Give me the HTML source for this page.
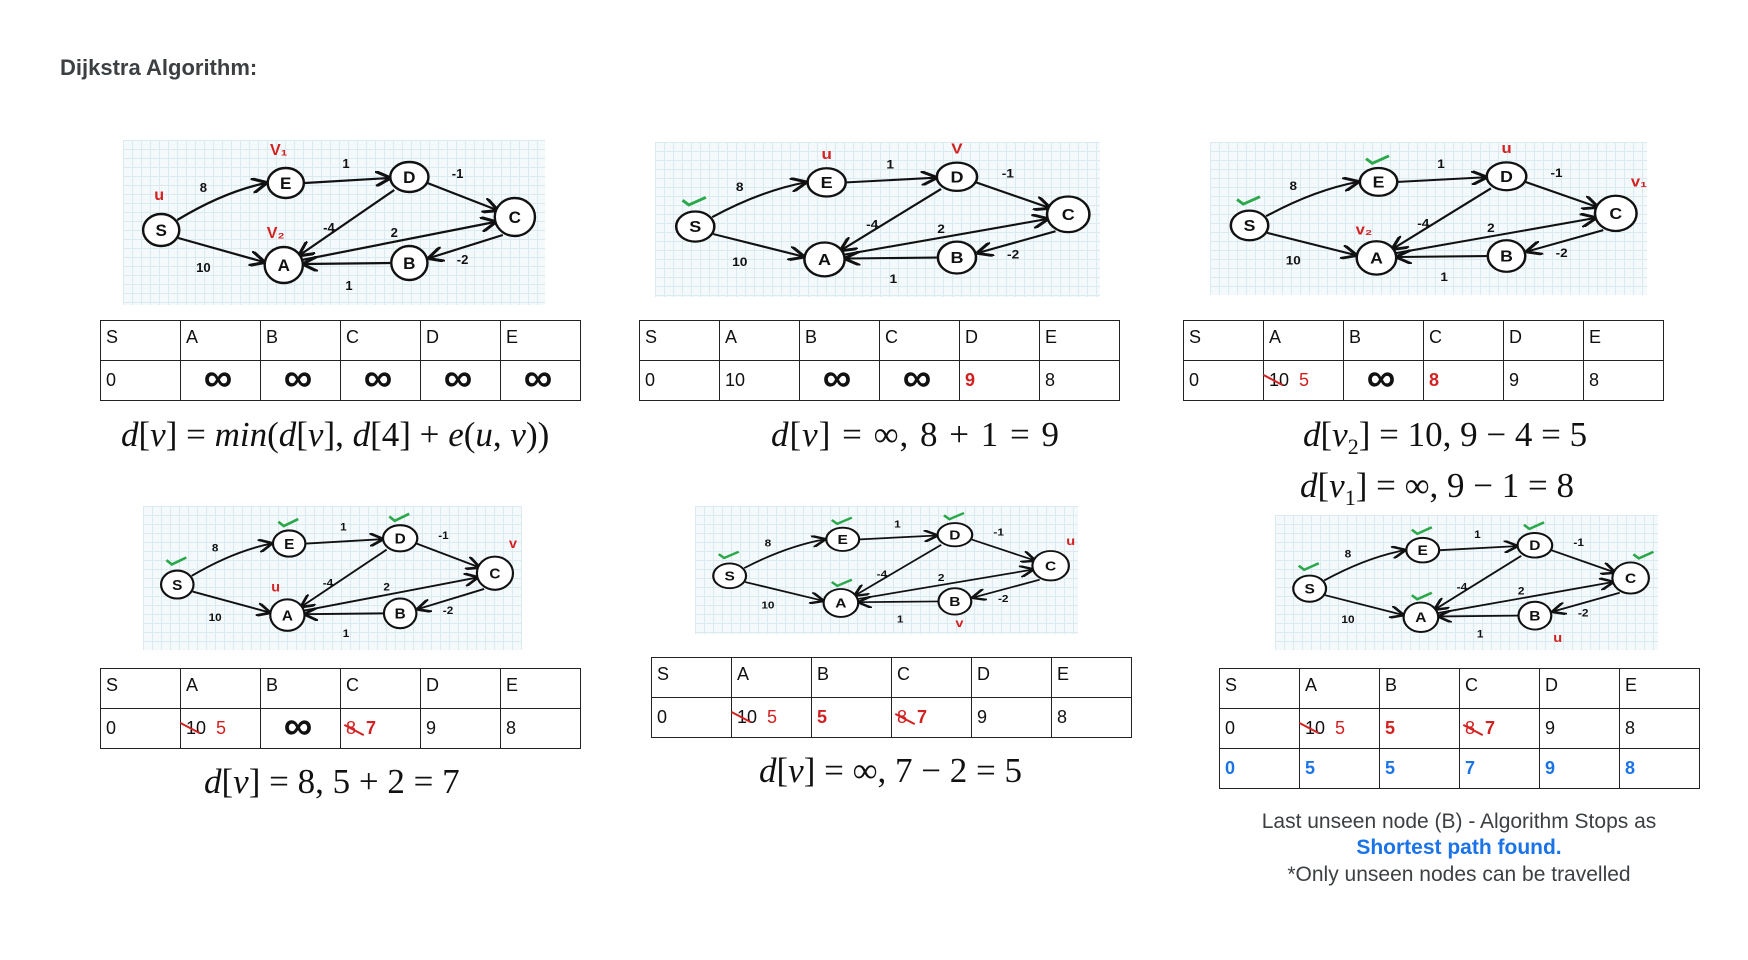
<!DOCTYPE html>
<html><head><meta charset="utf-8"><style>
*{margin:0;padding:0;box-sizing:border-box}
body{width:1748px;height:960px;background:#fff;position:relative;overflow:hidden;font-family:"Liberation Sans",sans-serif}
.t{position:absolute;left:60px;top:55px;font-weight:bold;font-size:22px;color:#3c4043}
.g{position:absolute;background-color:#f4fafc;background-image:linear-gradient(#dbe9f0 1px,transparent 1px),linear-gradient(90deg,#dbe9f0 1px,transparent 1px);background-size:9px 9px}
.g svg{width:100%;height:100%;display:block}
table{position:absolute;border-collapse:collapse;font-size:18px;color:#111}
td{border:1.5px solid #222;width:80px;height:40px;vertical-align:middle;padding:0 0 0 5px;position:relative}
tr:first-child td{vertical-align:top;padding-top:6px}
.inf{font-weight:bold;font-size:40px;line-height:30px;display:block;text-align:center;margin-left:-10px;margin-top:-6px}
.r{color:#d32020}.rb{color:#d32020;font-weight:bold}.b{color:#1a73e8;font-weight:bold}
.x{position:absolute;height:2px;background:#d32020;transform:rotate(28deg);width:22px}
.f{position:absolute;font-family:"Liberation Serif",serif;font-size:35px;color:#111;white-space:nowrap}
.f i{font-style:italic}
.n{position:absolute;left:1232px;width:454px;text-align:center;font-size:21px;color:#3c4043}
</style></head><body>
<div class="t">Dijkstra Algorithm:</div>

<!-- graph 1 -->
<div class="g" style="left:123px;top:140px;width:422px;height:165px"><svg viewBox="0 0 420 165" preserveAspectRatio="none">
<defs><marker id="ar" viewBox="0 0 10 10" refX="9" refY="5" markerWidth="7" markerHeight="7" orient="auto"><path d="M0,0L10,5L0,10" fill="none" stroke="#111" stroke-width="2"/></marker></defs>
<g fill="none" stroke="#111" stroke-width="2.2" marker-end="url(#ar)"><path d="M54,80 Q100,52 142,43"/><path d="M55,98 L140,122"/><path d="M181,43 L265,38"/><path d="M303,43 L372,70"/><path d="M270,50 L176,115"/><path d="M178,120 L370,82"/><path d="M378,95 L305,118"/><path d="M266,123 L180,124"/></g>
<g fill="#fff" stroke="#111" stroke-width="2.4"><ellipse cx="38" cy="90" rx="18" ry="16"/><ellipse cx="162" cy="43" rx="18" ry="15"/><ellipse cx="285" cy="37" rx="19" ry="15"/><ellipse cx="390" cy="77" rx="20" ry="19"/><ellipse cx="160" cy="125" rx="19" ry="18"/><ellipse cx="285" cy="123" rx="18" ry="17"/></g>
<g font-family="Liberation Sans" font-size="17" font-weight="bold" text-anchor="middle" fill="#111"><text x="38" y="96">S</text><text x="162" y="49">E</text><text x="285" y="43">D</text><text x="390" y="83">C</text><text x="160" y="131">A</text><text x="285" y="129">B</text></g>
<g font-family="Liberation Sans" font-size="13" font-weight="bold" text-anchor="middle" fill="#111"><text x="80" y="52">8</text><text x="80" y="132">10</text><text x="222" y="28">1</text><text x="333" y="38">-1</text><text x="205" y="92">-4</text><text x="270" y="97">2</text><text x="338" y="124">-2</text><text x="225" y="150">1</text></g>
<g font-family="Liberation Sans" font-size="16" font-weight="bold" fill="#d32020" text-anchor="middle"><text x="36" y="60">u</text><text x="155" y="15">V₁</text><text x="152" y="98">V₂</text></g>
</svg></div>
<table style="left:100px;top:320px"><tr><td>S</td><td>A</td><td>B</td><td>C</td><td>D</td><td>E</td></tr><tr><td>0</td><td><span class="inf">∞</span></td><td><span class="inf">∞</span></td><td><span class="inf">∞</span></td><td><span class="inf">∞</span></td><td><span class="inf">∞</span></td></tr></table>
<div class="f" style="left:121px;top:415px"><i>d</i>[<i>v</i>] = <i>min</i>(<i>d</i>[<i>v</i>], <i>d</i>[4] + <i>e</i>(<i>u</i>, <i>v</i>))</div>

<!-- graph 2 -->
<div class="g" style="left:655px;top:142px;width:445px;height:155px"><svg viewBox="0 0 420 165" preserveAspectRatio="none">
<g fill="none" stroke="#111" stroke-width="2.2" marker-end="url(#ar)"><path d="M54,80 Q100,52 142,43"/><path d="M55,98 L140,122"/><path d="M181,43 L265,38"/><path d="M303,43 L372,70"/><path d="M270,50 L176,115"/><path d="M178,120 L370,82"/><path d="M378,95 L305,118"/><path d="M266,123 L180,124"/></g>
<g fill="#fff" stroke="#111" stroke-width="2.4"><ellipse cx="38" cy="90" rx="18" ry="16"/><ellipse cx="162" cy="43" rx="18" ry="15"/><ellipse cx="285" cy="37" rx="19" ry="15"/><ellipse cx="390" cy="77" rx="20" ry="19"/><ellipse cx="160" cy="125" rx="19" ry="18"/><ellipse cx="285" cy="123" rx="18" ry="17"/></g>
<g font-family="Liberation Sans" font-size="17" font-weight="bold" text-anchor="middle" fill="#111"><text x="38" y="96">S</text><text x="162" y="49">E</text><text x="285" y="43">D</text><text x="390" y="83">C</text><text x="160" y="131">A</text><text x="285" y="129">B</text></g>
<g font-family="Liberation Sans" font-size="13" font-weight="bold" text-anchor="middle" fill="#111"><text x="80" y="52">8</text><text x="80" y="132">10</text><text x="222" y="28">1</text><text x="333" y="38">-1</text><text x="205" y="92">-4</text><text x="270" y="97">2</text><text x="338" y="124">-2</text><text x="225" y="150">1</text></g>
<path d="M26,62 l6,5 l16,-8" fill="none" stroke="#2aa84a" stroke-width="3"/>
<g font-family="Liberation Sans" font-size="16" font-weight="bold" fill="#d32020" text-anchor="middle"><text x="162" y="18">u</text><text x="285" y="12">V</text></g>
</svg></div>
<table style="left:639px;top:320px"><tr><td>S</td><td>A</td><td>B</td><td>C</td><td>D</td><td>E</td></tr><tr><td>0</td><td>10</td><td><span class="inf">∞</span></td><td><span class="inf">∞</span></td><td><span class="rb">9</span></td><td>8</td></tr></table>
<div class="f" style="left:771px;top:415px;letter-spacing:1px;word-spacing:1px"><i>d</i>[<i>v</i>] = ∞, 8 + 1 = 9</div>

<!-- graph 3 -->
<div class="g" style="left:1210px;top:142px;width:437px;height:153px"><svg viewBox="0 0 420 165" preserveAspectRatio="none">
<g fill="none" stroke="#111" stroke-width="2.2" marker-end="url(#ar)"><path d="M54,80 Q100,52 142,43"/><path d="M55,98 L140,122"/><path d="M181,43 L265,38"/><path d="M303,43 L372,70"/><path d="M270,50 L176,115"/><path d="M178,120 L370,82"/><path d="M378,95 L305,118"/><path d="M266,123 L180,124"/></g>
<g fill="#fff" stroke="#111" stroke-width="2.4"><ellipse cx="38" cy="90" rx="18" ry="16"/><ellipse cx="162" cy="43" rx="18" ry="15"/><ellipse cx="285" cy="37" rx="19" ry="15"/><ellipse cx="390" cy="77" rx="20" ry="19"/><ellipse cx="160" cy="125" rx="19" ry="18"/><ellipse cx="285" cy="123" rx="18" ry="17"/></g>
<g font-family="Liberation Sans" font-size="17" font-weight="bold" text-anchor="middle" fill="#111"><text x="38" y="96">S</text><text x="162" y="49">E</text><text x="285" y="43">D</text><text x="390" y="83">C</text><text x="160" y="131">A</text><text x="285" y="129">B</text></g>
<g font-family="Liberation Sans" font-size="13" font-weight="bold" text-anchor="middle" fill="#111"><text x="80" y="52">8</text><text x="80" y="132">10</text><text x="222" y="28">1</text><text x="333" y="38">-1</text><text x="205" y="92">-4</text><text x="270" y="97">2</text><text x="338" y="124">-2</text><text x="225" y="150">1</text></g>
<path d="M26,62 l6,5 l16,-8 M150,18 l6,5 l16,-8" fill="none" stroke="#2aa84a" stroke-width="3"/>
<g font-family="Liberation Sans" font-size="16" font-weight="bold" fill="#d32020" text-anchor="middle"><text x="285" y="12">u</text><text x="420" y="48" text-anchor="end">v₁</text><text x="148" y="100">v₂</text></g>
</svg></div>
<table style="left:1183px;top:320px"><tr><td>S</td><td>A</td><td>B</td><td>C</td><td>D</td><td>E</td></tr><tr><td>0</td><td><span class="x" style="left:-2px;top:18px"></span>10 &nbsp;<span class="r">5</span></td><td><span class="inf">∞</span></td><td><span class="rb">8</span></td><td>9</td><td>8</td></tr></table>
<div class="f" style="left:1303px;top:415px"><i>d</i>[<i>v</i><sub style="font-size:22px">2</sub>] = 10, 9 − 4 = 5</div>
<div class="f" style="left:1300px;top:466px"><i>d</i>[<i>v</i><sub style="font-size:22px">1</sub>] = ∞, 9 − 1 = 8</div>

<!-- graph 4 -->
<div class="g" style="left:143px;top:506px;width:379px;height:144px"><svg viewBox="0 0 420 165" preserveAspectRatio="none">
<g fill="none" stroke="#111" stroke-width="2.2" marker-end="url(#ar)"><path d="M54,80 Q100,52 142,43"/><path d="M55,98 L140,122"/><path d="M181,43 L265,38"/><path d="M303,43 L372,70"/><path d="M270,50 L176,115"/><path d="M178,120 L370,82"/><path d="M378,95 L305,118"/><path d="M266,123 L180,124"/></g>
<g fill="#fff" stroke="#111" stroke-width="2.4"><ellipse cx="38" cy="90" rx="18" ry="16"/><ellipse cx="162" cy="43" rx="18" ry="15"/><ellipse cx="285" cy="37" rx="19" ry="15"/><ellipse cx="390" cy="77" rx="20" ry="19"/><ellipse cx="160" cy="125" rx="19" ry="18"/><ellipse cx="285" cy="123" rx="18" ry="17"/></g>
<g font-family="Liberation Sans" font-size="17" font-weight="bold" text-anchor="middle" fill="#111"><text x="38" y="96">S</text><text x="162" y="49">E</text><text x="285" y="43">D</text><text x="390" y="83">C</text><text x="160" y="131">A</text><text x="285" y="129">B</text></g>
<g font-family="Liberation Sans" font-size="13" font-weight="bold" text-anchor="middle" fill="#111"><text x="80" y="52">8</text><text x="80" y="132">10</text><text x="222" y="28">1</text><text x="333" y="38">-1</text><text x="205" y="92">-4</text><text x="270" y="97">2</text><text x="338" y="124">-2</text><text x="225" y="150">1</text></g>
<path d="M26,62 l6,5 l16,-8 M150,18 l6,5 l16,-8 M273,12 l6,5 l16,-8" fill="none" stroke="#2aa84a" stroke-width="3"/>
<g font-family="Liberation Sans" font-size="16" font-weight="bold" fill="#d32020" text-anchor="middle"><text x="410" y="48">v</text><text x="147" y="98">u</text></g>
</svg></div>
<table style="left:100px;top:668px"><tr><td>S</td><td>A</td><td>B</td><td>C</td><td>D</td><td>E</td></tr><tr><td>0</td><td><span class="x" style="left:-2px;top:18px"></span>10 &nbsp;<span class="r">5</span></td><td><span class="inf">∞</span></td><td><span class="x" style="left:2px;top:20px"></span><span class="r">8</span> &nbsp;<span class="rb">7</span></td><td>9</td><td>8</td></tr></table>
<div class="f" style="left:204px;top:762px"><i>d</i>[<i>v</i>] = 8, 5 + 2 = 7</div>

<!-- graph 5 -->
<div class="g" style="left:695px;top:506px;width:383px;height:128px"><svg viewBox="0 0 420 165" preserveAspectRatio="none">
<g fill="none" stroke="#111" stroke-width="2.2" marker-end="url(#ar)"><path d="M54,80 Q100,52 142,43"/><path d="M55,98 L140,122"/><path d="M181,43 L265,38"/><path d="M303,43 L372,70"/><path d="M270,50 L176,115"/><path d="M178,120 L370,82"/><path d="M378,95 L305,118"/><path d="M266,123 L180,124"/></g>
<g fill="#fff" stroke="#111" stroke-width="2.4"><ellipse cx="38" cy="90" rx="18" ry="16"/><ellipse cx="162" cy="43" rx="18" ry="15"/><ellipse cx="285" cy="37" rx="19" ry="15"/><ellipse cx="390" cy="77" rx="20" ry="19"/><ellipse cx="160" cy="125" rx="19" ry="18"/><ellipse cx="285" cy="123" rx="18" ry="17"/></g>
<g font-family="Liberation Sans" font-size="17" font-weight="bold" text-anchor="middle" fill="#111"><text x="38" y="96">S</text><text x="162" y="49">E</text><text x="285" y="43">D</text><text x="390" y="83">C</text><text x="160" y="131">A</text><text x="285" y="129">B</text></g>
<g font-family="Liberation Sans" font-size="13" font-weight="bold" text-anchor="middle" fill="#111"><text x="80" y="52">8</text><text x="80" y="132">10</text><text x="222" y="28">1</text><text x="333" y="38">-1</text><text x="205" y="92">-4</text><text x="270" y="97">2</text><text x="338" y="124">-2</text><text x="225" y="150">1</text></g>
<path d="M26,62 l6,5 l16,-8 M150,18 l6,5 l16,-8 M273,12 l6,5 l16,-8 M150,98 l6,5 l16,-8" fill="none" stroke="#2aa84a" stroke-width="3"/>
<g font-family="Liberation Sans" font-size="16" font-weight="bold" fill="#d32020" text-anchor="middle"><text x="412" y="50">u</text><text x="290" y="156">v</text></g>
</svg></div>
<table style="left:651px;top:657px"><tr><td>S</td><td>A</td><td>B</td><td>C</td><td>D</td><td>E</td></tr><tr><td>0</td><td><span class="x" style="left:-2px;top:18px"></span>10 &nbsp;<span class="r">5</span></td><td><span class="rb">5</span></td><td><span class="x" style="left:2px;top:20px"></span><span class="r">8</span> &nbsp;<span class="rb">7</span></td><td>9</td><td>8</td></tr></table>
<div class="f" style="left:759px;top:751px"><i>d</i>[<i>v</i>] = ∞, 7 − 2 = 5</div>

<!-- graph 6 -->
<div class="g" style="left:1275px;top:515px;width:383px;height:135px"><svg viewBox="0 0 420 165" preserveAspectRatio="none">
<g fill="none" stroke="#111" stroke-width="2.2" marker-end="url(#ar)"><path d="M54,80 Q100,52 142,43"/><path d="M55,98 L140,122"/><path d="M181,43 L265,38"/><path d="M303,43 L372,70"/><path d="M270,50 L176,115"/><path d="M178,120 L370,82"/><path d="M378,95 L305,118"/><path d="M266,123 L180,124"/></g>
<g fill="#fff" stroke="#111" stroke-width="2.4"><ellipse cx="38" cy="90" rx="18" ry="16"/><ellipse cx="162" cy="43" rx="18" ry="15"/><ellipse cx="285" cy="37" rx="19" ry="15"/><ellipse cx="390" cy="77" rx="20" ry="19"/><ellipse cx="160" cy="125" rx="19" ry="18"/><ellipse cx="285" cy="123" rx="18" ry="17"/></g>
<g font-family="Liberation Sans" font-size="17" font-weight="bold" text-anchor="middle" fill="#111"><text x="38" y="96">S</text><text x="162" y="49">E</text><text x="285" y="43">D</text><text x="390" y="83">C</text><text x="160" y="131">A</text><text x="285" y="129">B</text></g>
<g font-family="Liberation Sans" font-size="13" font-weight="bold" text-anchor="middle" fill="#111"><text x="80" y="52">8</text><text x="80" y="132">10</text><text x="222" y="28">1</text><text x="333" y="38">-1</text><text x="205" y="92">-4</text><text x="270" y="97">2</text><text x="338" y="124">-2</text><text x="225" y="150">1</text></g>
<path d="M26,62 l6,5 l16,-8 M150,18 l6,5 l16,-8 M273,12 l6,5 l16,-8 M150,98 l6,5 l16,-8 M393,48 l6,5 l16,-8" fill="none" stroke="#2aa84a" stroke-width="3"/>
<g font-family="Liberation Sans" font-size="16" font-weight="bold" fill="#d32020" text-anchor="middle"><text x="310" y="155">u</text></g>
</svg></div>
<table style="left:1219px;top:668px"><tr><td>S</td><td>A</td><td>B</td><td>C</td><td>D</td><td>E</td></tr><tr><td>0</td><td><span class="x" style="left:-2px;top:18px"></span>10 &nbsp;<span class="r">5</span></td><td><span class="rb">5</span></td><td><span class="x" style="left:2px;top:20px"></span><span class="r">8</span> &nbsp;<span class="rb">7</span></td><td>9</td><td>8</td></tr><tr><td><span class="b">0</span></td><td><span class="b">5</span></td><td><span class="b">5</span></td><td><span class="b">7</span></td><td><span class="b">9</span></td><td><span class="b">8</span></td></tr></table>
<div class="n" style="top:810px">Last unseen node (B) - Algorithm Stops as</div>
<div class="n" style="top:836px;color:#1a73e8;font-weight:bold">Shortest path found.</div>
<div class="n" style="top:863px">*Only unseen nodes can be travelled</div>
</body></html>
